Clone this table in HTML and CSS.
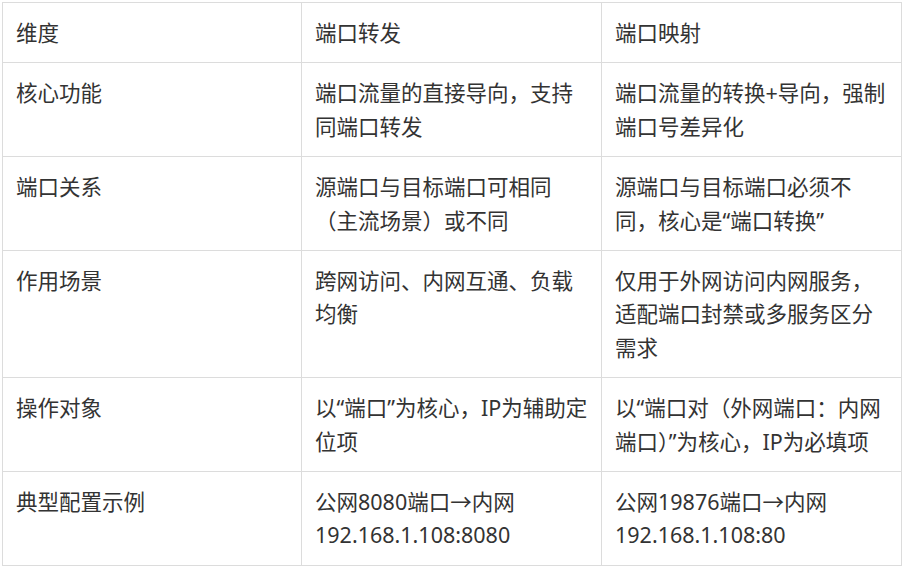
FILE: index.html
```html
<!DOCTYPE html>
<html lang="zh-CN">
<head>
<meta charset="utf-8">
<title>端口转发与端口映射</title>
<link rel="stylesheet" href="styles.css">
</head>
<body>
<table class="compare">
  <colgroup><col class="c1"><col class="c2"><col class="c3"></colgroup>
  <tbody>
    <tr><td>维度</td><td>端口转发</td><td>端口映射</td></tr>
    <tr><td>核心功能</td><td>端口流量的直接导向，支持同端口转发</td><td>端口流量的转换+导向，强制端口号差异化</td></tr>
    <tr><td>端口关系</td><td>源端口与目标端口可相同（主流场景）或不同</td><td>源端口与目标端口必须不同，核心是“端口转换”</td></tr>
    <tr><td>作用场景</td><td>跨网访问、内网互通、负载均衡</td><td>仅用于外网访问内网服务，适配端口封禁或多服务区分需求</td></tr>
    <tr><td>操作对象</td><td>以“端口”为核心，IP为辅助定位项</td><td>以“端口对（外网端口：内网端口）”为核心，IP为必填项</td></tr>
    <tr><td>典型配置示例</td><td>公网8080端口→内网192.168.1.108:8080</td><td>公网19876端口→内网192.168.1.108:80</td></tr>
  </tbody>
</table>
</body>
</html>
```
FILE: styles.css
```css
html, body {
  margin: 0;
  padding: 0;
  background: #fff;
}
body {
  padding: 2px;
}
.compare {
  border-collapse: collapse;
  table-layout: fixed;
  width: 900px;
  font-family: "Noto Sans", "Noto Sans CJK SC", sans-serif;
  font-size: 21.5px;
  line-height: 33.4px;
  color: #333;
}
.compare .c1 { width: 299px; }
.compare .c2 { width: 300px; }
.compare .c3 { width: 300px; }
.compare td {
  border: 1px solid #dcdcdc;
  padding: 13px 13px;
  vertical-align: top;
}
```
